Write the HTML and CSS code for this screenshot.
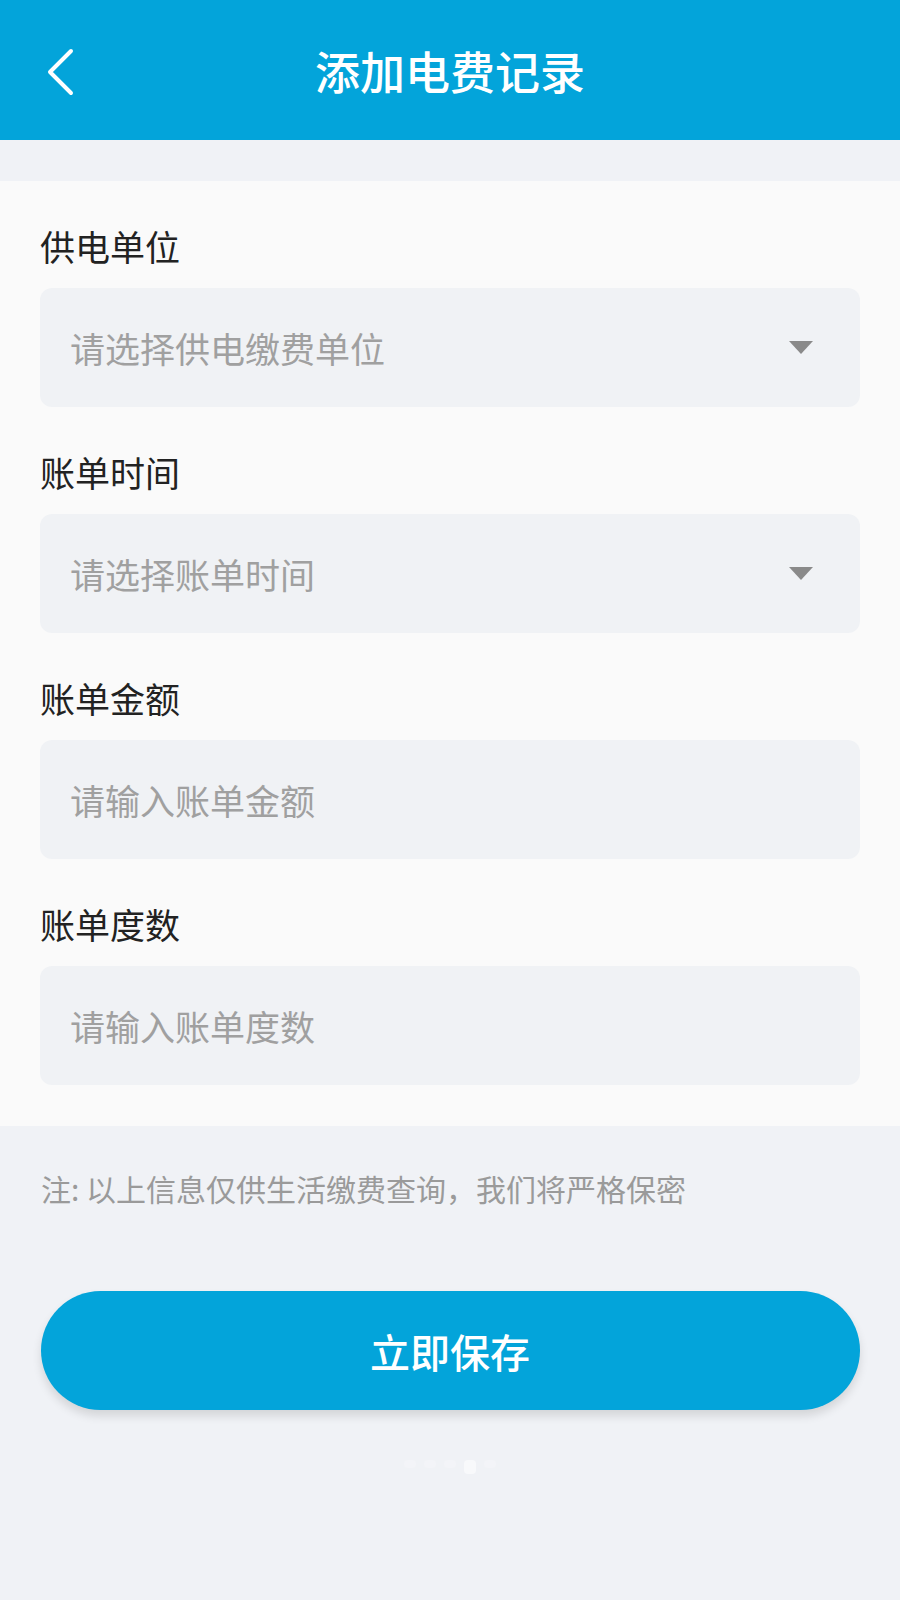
FILE: index.html
```html
<!DOCTYPE html>
<html lang="zh-CN">
<head>
  <meta charset="UTF-8">
  <title>添加电费记录</title>
  <link rel="stylesheet" href="styles.css">
</head>
<body>

  <header class="topbar">
    <a class="back" href="#">
      <svg width="30" height="48" viewBox="0 0 30 48"><polyline points="26,3 5,24 26,45" fill="none" stroke="#fff" stroke-width="4" stroke-linecap="round" stroke-linejoin="round"/></svg>
    </a>
    <h1>添加电费记录</h1>
  </header>

  <form class="card">
    <div class="field">
      <label>供电单位</label>
      <div class="box select"><span>请选择供电缴费单位</span><i class="caret"></i></div>
    </div>
    <div class="field">
      <label>账单时间</label>
      <div class="box select"><span>请选择账单时间</span><i class="caret"></i></div>
    </div>
    <div class="field">
      <label>账单金额</label>
      <input class="box" type="text" placeholder="请输入账单金额">
    </div>
    <div class="field">
      <label>账单度数</label>
      <input class="box" type="text" placeholder="请输入账单度数">
    </div>
  </form>

  <p class="note">注: 以上信息仅供生活缴费查询，我们将严格保密</p>

  <button class="save" type="button">立即保存</button>

  <div class="dots"><i></i><i></i><i></i><i class="on"></i><i></i></div>

</body>
</html>
```

FILE: styles.css
```css
body {
  margin: 0;
  font-family: "Noto Sans CJK SC", "Noto Sans", sans-serif;
  background-color: #f0f2f6;
  min-height: 1600px;
}

.topbar {
  height: 140px;
  background-color: #03a4da;
  display: flex;
  align-items: center;
  justify-content: center;
  position: relative;
}

.back {
  position: absolute;
  left: 45px;
  top: 48px;
  display: block;
  line-height: 0;
}

.topbar h1 {
  margin: 0;
  color: #fff;
  font-size: 45px;
  font-weight: 500;
}

.card {
  margin-top: 41px;
  background-color: #fafafa;
  padding: 41px 40px;
  display: flex;
  flex-direction: column;
  gap: 41px;
}

.field {
  display: flex;
  flex-direction: column;
  gap: 18px;
}

.field label {
  font-size: 35px;
  line-height: 48px;
  color: #222;
}

.box {
  box-sizing: border-box;
  height: 119px;
  width: 100%;
  border: none;
  border-radius: 12px;
  background-color: #f0f2f5;
  padding: 0 30px;
  font-family: inherit;
  font-size: 35px;
  color: #333;
  outline: none;
}

.box::placeholder {
  color: #a0a0a0;
}

.select {
  display: flex;
  align-items: center;
  justify-content: space-between;
  color: #a0a0a0;
}

.caret {
  width: 0;
  height: 0;
  border-left: 12px solid transparent;
  border-right: 12px solid transparent;
  border-top: 13px solid #8a8a8a;
  margin-right: 17px;
}

.note {
  margin: 42px 41px 0;
  font-size: 30px;
  line-height: 40px;
  color: #9a9a9a;
}

.save {
  display: block;
  box-sizing: border-box;
  width: 819px;
  height: 119px;
  margin: 83px auto 0;
  border: none;
  border-radius: 60px;
  background-color: #03a4da;
  color: #fff;
  font-family: inherit;
  font-size: 40px;
  font-weight: 500;
  box-shadow: 0 6px 10px rgba(0, 0, 0, 0.12);
}

.dots {
  display: flex;
  justify-content: center;
  gap: 8px;
  margin-top: 50px;
}

.dots i {
  width: 12px;
  height: 8px;
  border-radius: 4px;
  background-color: #f3f4f8;
}

.dots i.on {
  height: 14px;
  background-color: #f8f9fb;
}
```
